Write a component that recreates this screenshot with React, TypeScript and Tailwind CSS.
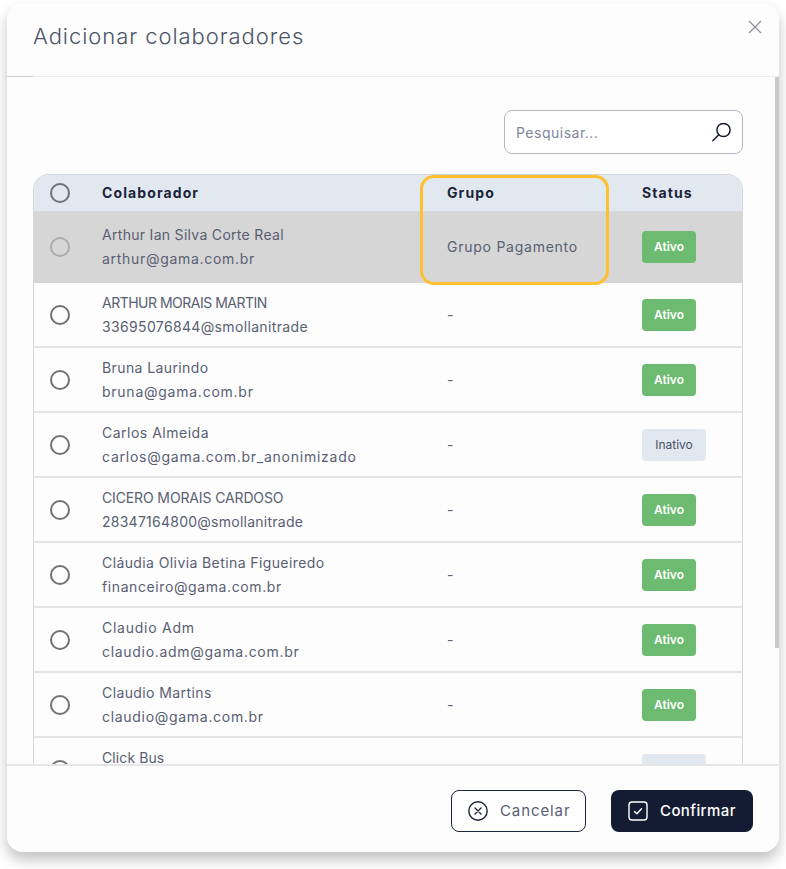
const rows = [
  { name: "ARTHUR MORAIS MARTIN", email: "33695076844@smollanitrade", nameCls: "tracking-[-0.5px]", emailCls: "tracking-[0.35px]", active: true },
  { name: "Bruna Laurindo", email: "bruna@gama.com.br", nameCls: "tracking-[0.4px]", emailCls: "tracking-[0.75px]", active: true },
  { name: "Carlos Almeida", email: "carlos@gama.com.br_anonimizado", nameCls: "tracking-[0.5px]", emailCls: "tracking-[0.75px]", active: false },
  { name: "CICERO MORAIS CARDOSO", email: "28347164800@smollanitrade", nameCls: "tracking-[-0.13px]", emailCls: "tracking-[0.25px]", active: true },
  { name: "Cláudia Olivia Betina Figueiredo", email: "financeiro@gama.com.br", nameCls: "tracking-[0.4px]", emailCls: "tracking-[0.6px]", active: true },
  { name: "Claudio Adm", email: "claudio.adm@gama.com.br", nameCls: "tracking-[0.75px]", emailCls: "tracking-[0.7px]", active: true },
  { name: "Claudio Martins", email: "claudio@gama.com.br", nameCls: "tracking-[0.4px]", emailCls: "tracking-[0.7px]", active: true },
  { name: "Click Bus", email: "clickbus@gama.com.br", nameCls: "tracking-[0.1px]", emailCls: "tracking-[0.7px]", active: false },
];

function Badge({ active }: { active: boolean }) {
  return active ? (
    <span className="flex h-8 w-[54px] items-center justify-center rounded bg-[#6dbb70] text-[12px] font-semibold text-white">Ativo</span>
  ) : (
    <span className="flex h-8 w-16 items-center justify-center rounded bg-[#e2e8f0] text-[12px] text-[#475069]">Inativo</span>
  );
}

function Radio({ muted }: { muted?: boolean }) {
  return <span className={`block size-5 rounded-full border-2 ${muted ? "border-[#acacac]" : "border-[#6f7278]"}`} />;
}

export default function App() {
  return (
    <div className="h-[869px] w-[786px] overflow-hidden bg-white pt-[3px] pl-[7px] font-['Inter',sans-serif]">
      <div className="relative flex h-[849px] w-[772px] flex-col overflow-hidden rounded-2xl bg-[#fdfdfd] shadow-[0_8px_14px_rgba(0,0,0,0.24)]">
        <header className="relative h-[74px] shrink-0 border-b border-[#ececef] pl-[26px] pt-[19px]">
          <h1 className="text-[22px] font-light leading-7 tracking-[0.95px] text-[#4b5467]">Adicionar colaboradores</h1>
          <svg className="absolute right-[17px] top-[17px] size-[14px] text-[#8d9098]" viewBox="0 0 14 14" fill="none" stroke="currentColor" strokeWidth="1.2">
            <path d="M1 1l12 12M13 1L1 13" />
          </svg>
          <div className="absolute -bottom-px left-0 h-px w-[26px] bg-[#cfcfcf]" />
        </header>

        <div className="relative min-h-0 flex-1 overflow-hidden">
          <div className="absolute right-0 top-0 h-[571px] w-[4px] bg-[#cacaca]" />
          <div className="flex justify-end pt-[33px] pr-9">
            <div className="flex h-11 w-[239px] items-center justify-between rounded-lg border border-[#b4b7c0] bg-white pl-[11px] pr-[9px]">
              <span className="text-[14px] tracking-[0.5px] text-[#7f8699]">Pesquisar...</span>
              <svg className="size-[22px] text-[#151d33]" viewBox="0 0 22 22" fill="none" stroke="currentColor" strokeWidth="1.5">
                <circle cx="12.5" cy="9" r="6.6" />
                <path d="M7.8 13.8L1.8 19.8" strokeLinecap="round" />
              </svg>
            </div>
          </div>

          <div className="ml-[26px] mt-5 w-[710px] overflow-hidden rounded-t-2xl border-x border-t border-[#d4d6d9]">
            <div className="grid h-9 grid-cols-[68px_345px_195px_1fr] items-center bg-[#e2e8f0] text-[14px] font-bold tracking-[1.1px] text-[#1b2439]">
              <div className="pl-[16px]"><Radio /></div>
              <div className="pb-[2px]">Colaborador</div>
              <div className="pb-[2px]">Grupo</div>
              <div className="pb-[2px]">Status</div>
            </div>
            <div className="grid h-[72px] grid-cols-[68px_345px_195px_1fr] items-center bg-[#d6d6d6] text-[14px] text-[#596072]">
              <div className="pl-[16px]"><Radio muted /></div>
              <div className="leading-6">
                <div className="tracking-[0.3px]">Arthur Ian Silva Corte Real</div>
                <div className="tracking-[0.7px]">arthur@gama.com.br</div>
              </div>
              <div className="pb-[2px] tracking-[0.75px]">Grupo Pagamento</div>
              <Badge active />
            </div>
            {rows.map((row) => (
              <div key={row.name} className="grid h-[65px] grid-cols-[68px_345px_195px_1fr] items-center border-b-2 border-[#e5e5e5] text-[14px] text-[#596072]">
                <div className="pl-[16px]"><Radio /></div>
                <div className="leading-6">
                  <div className={row.nameCls}>{row.name}</div>
                  <div className={row.emailCls}>{row.email}</div>
                </div>
                <div>-</div>
                <Badge active={row.active} />
              </div>
            ))}
          </div>
        </div>

        <footer className="flex h-[88px] shrink-0 items-start justify-end gap-[25px] border-t-2 border-[#e6e6e8] bg-[#fdfdfd] pt-[24px] pr-[26px]">
          <button className="flex h-[42px] w-[135px] items-center gap-3 rounded-lg border border-[#1b2439] bg-white pl-4 text-[15px] tracking-[0.9px] text-[#596072]">
            <svg className="size-5 text-[#1b2439]" viewBox="0 0 20 20" fill="none" stroke="currentColor" strokeWidth="1.4">
              <circle cx="10" cy="10" r="9.2" />
              <path d="M7 7l6 6M13 7l-6 6" strokeLinecap="round" />
            </svg>
            Cancelar
          </button>
          <button className="flex h-[42px] w-[142px] items-center gap-3 rounded-lg bg-[#141c33] pl-[17px] text-[15px] font-medium tracking-[0.4px] text-white">
            <svg className="size-5" viewBox="0 0 20 20" fill="none" stroke="currentColor" strokeWidth="1.4">
              <rect x="1" y="1" width="18" height="18" rx="3" />
              <path d="M6.5 10.5l2.4 2.3 4.6-5" strokeLinecap="round" strokeLinejoin="round" />
            </svg>
            Confirmar
          </button>
        </footer>

        <div className="absolute left-[413px] top-[172px] h-[110px] w-[189px] rounded-[14px] border-[3px] border-[#fdc02f]" />
      </div>
    </div>
  );
}
